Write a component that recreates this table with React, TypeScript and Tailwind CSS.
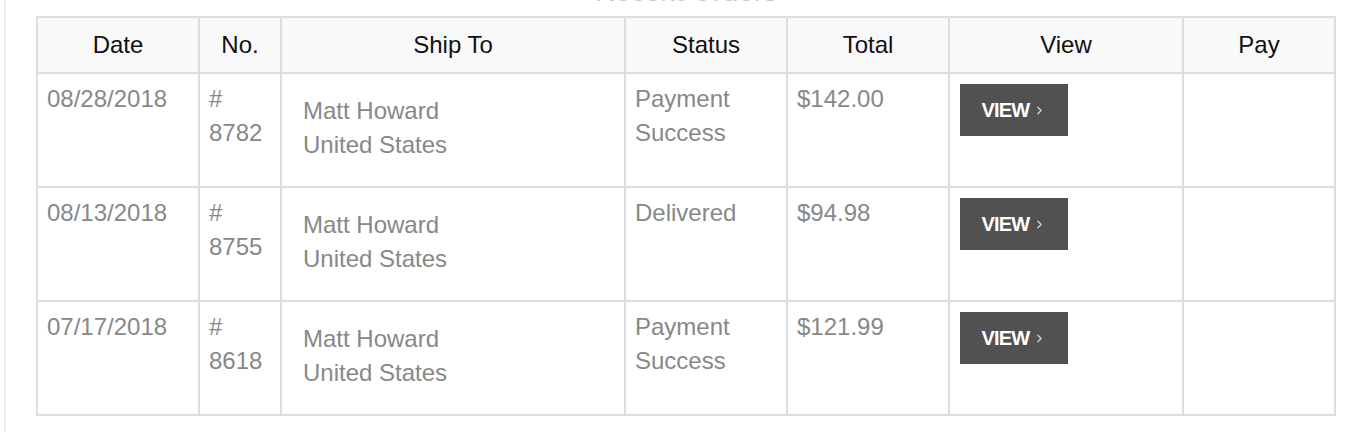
import { ChevronRight } from 'lucide-react';

interface Order {
  date: string;
  number: string;
  name: string;
  country: string;
  status: string;
  total: string;
}

const orders: Order[] = [
  { date: '08/28/2018', number: '8782', name: 'Matt Howard', country: 'United States', status: 'Payment Success', total: '$142.00' },
  { date: '08/13/2018', number: '8755', name: 'Matt Howard', country: 'United States', status: 'Delivered', total: '$94.98' },
  { date: '07/17/2018', number: '8618', name: 'Matt Howard', country: 'United States', status: 'Payment Success', total: '$121.99' },
];

const headings = ['Date', 'No.', 'Ship To', 'Status', 'Total', 'View', 'Pay'];

const cell = 'border-l-2 border-t-2 border-[#dddddd]';
const bodyCell = `${cell} h-[114px] pl-[9px] pr-2 pt-2 text-[24px] leading-[34px] text-[#888888]`;

export default function App() {
  return (
    <div className="min-h-[432px] bg-white pl-[4px] font-['Liberation_Sans',Arial,sans-serif]">
      <div className="min-h-[432px] border-l-2 border-[#eeeeee] pl-[30px]">
        <div className="h-[16px] overflow-hidden">
          <h2 className="-mt-[22px] w-[1300px] text-center text-[28px] leading-none text-[#c8c8c8]">
            Recent Orders
          </h2>
        </div>

        <div className="grid w-[1300px] grid-cols-[162px_82px_344px_162px_162px_234px_152px] border-b-2 border-r-2 border-[#dddddd]">
          {headings.map((heading) => (
            <div
              key={heading}
              className={`${cell} flex h-[56px] items-center justify-center bg-[#f9f9f9] text-[24px] text-[#111111]`}
            >
              {heading}
            </div>
          ))}

          {orders.map((order) => (
            <div key={order.number} className="contents">
              <div className={bodyCell}>{order.date}</div>
              <div className={bodyCell}># {order.number}</div>
              <div className={bodyCell}>
                <div className="p-3">
                  <div>{order.name}</div>
                  <div>{order.country}</div>
                </div>
              </div>
              <div className={bodyCell}>{order.status}</div>
              <div className={bodyCell}>{order.total}</div>
              <div className={bodyCell}>
                <button className="ml-[1px] mt-[2px] flex h-[52px] w-[108px] items-center justify-center gap-[4px] bg-[#515151] text-[20px] font-bold leading-none tracking-[-0.8px] text-white">
                  VIEW
                  <ChevronRight className="h-[13px] w-[13px] text-[#cfcfcf]" strokeWidth={2.5} />
                </button>
              </div>
              <div className={bodyCell} />
            </div>
          ))}
        </div>
      </div>
    </div>
  );
}
